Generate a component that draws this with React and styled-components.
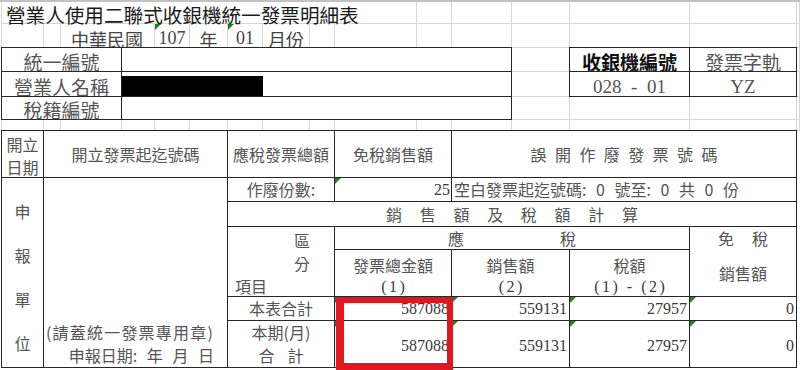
import React from "react";
import styled, { createGlobalStyle, css } from "styled-components";

const GlobalStyle = createGlobalStyle`
  *, *::before, *::after { box-sizing: border-box; }
  html, body { margin: 0; padding: 0; background: #fff; }
  body {
    width: 800px;
    height: 370px;
    overflow: hidden;
    font-family: "Noto Sans CJK TC", "Noto Sans CJK SC", sans-serif;
    color: #555;
  }
`;

const COL_EDGES = [0, 2, 44, 61, 122, 155, 190, 228, 263, 310, 335, 417, 452, 512, 570, 690, 797, 800];
const ROW_EDGES = [0, 2, 24, 48, 72, 97, 120, 131, 178, 202, 227, 250, 297, 321, 368, 370];
const TOP_X = [2, 44, 61, 122, 155, 190, 228, 263, 310, 335, 417, 452, 512, 570, 690, 797, 800];
const TOP_Y = [2, 24, 48, 72, 97, 120, 131];

const track = (edges) => edges.slice(1).map((e, i) => `${e - edges[i]}px`).join(" ");
const lineOf = (edges, v) => edges.indexOf(v) + 1;
const area = (x1, x2, y1, y2) => ({
  $col: `${lineOf(COL_EDGES, x1)} / ${lineOf(COL_EDGES, x2)}`,
  $row: `${lineOf(ROW_EDGES, y1)} / ${lineOf(ROW_EDGES, y2)}`,
});

const placed = css`
  grid-column: ${(p) => p.$col};
  grid-row: ${(p) => p.$row};
`;

const greenMark = css`
  &::before {
    content: "";
    position: absolute;
    top: 0;
    left: 0;
    border-top: 6px solid #2a7a36;
    border-right: 6px solid transparent;
  }
`;

const Sheet = styled.div`
  display: grid;
  grid-template-columns: ${track(COL_EDGES)};
  grid-template-rows: ${track(ROW_EDGES)};
  width: 800px;
  height: 370px;
  overflow: hidden;
  background: #fff;
`;

const FrameRule = styled.div`
  ${placed};
  position: relative;
  z-index: 3;
  background: #c2c2c2;
`;

const GridCell = styled.div`
  ${placed};
  margin: -1px 0 0 -1px;
  border: 1px solid #d6d6d6;
  background: #fff;
`;

const SheetText = styled(GridCell)`
  position: relative;
  display: flex;
  align-items: ${(p) => p.$align || "flex-end"};
  justify-content: ${(p) => p.$justify || "center"};
  padding: ${(p) => p.$pad || "0"};
  white-space: nowrap;
  ${(p) => p.$mark && greenMark};
`;

const Box = styled.div`
  ${placed};
  position: relative;
  margin: -1px 0 0 -1px;
  border: 1px solid #262626;
  background: #fff;
  display: flex;
  flex-direction: ${(p) => p.$dir || "row"};
  align-items: ${(p) => p.$align || "center"};
  justify-content: ${(p) => p.$justify || "center"};
  padding: ${(p) => p.$pad || "0"};
  white-space: nowrap;
  ${(p) => p.$mark && greenMark};
`;

const Highlight = styled.div`
  ${placed};
  position: relative;
  z-index: 2;
  margin: 0 -1px 0 1px;
  border-style: solid;
  border-color: #e1161f;
  border-width: 6px 6px 7px 8px;
`;

const Title = styled.span`
  font-size: 19.6px;
  line-height: 20px;
  color: #1a1a1a;
`;

const Period = styled.span`
  font-size: 18px;
  line-height: 16px;
  color: #444;
`;

const PeriodNum = styled.span`
  font-family: "Liberation Serif", "Times New Roman", serif;
  font-size: 18px;
  line-height: 18px;
  color: #444;
`;

const Label = styled.span`
  font-size: 19px;
  line-height: 19px;
  color: #555;
`;

const KeyLabel = styled(Label)`
  font-weight: 700;
  color: #111;
`;

const Code = styled.span`
  font-family: "Liberation Serif", "Times New Roman", serif;
  font-size: 19px;
  line-height: 19px;
  color: #555;
  white-space: pre;
`;

const Redacted = styled.div`
  width: 141px;
  height: 20px;
  background: #000;
`;

const Head = styled.span`
  display: block;
  font-size: 16px;
  line-height: ${(p) => p.$lh || "23px"};
  color: #555;
  letter-spacing: ${(p) => p.$ls || "0px"};
  padding-left: ${(p) => p.$ls || "0px"};
  word-spacing: ${(p) => p.$ws || "normal"};
  white-space: pre;
`;

const Num = styled.span`
  display: block;
  font-family: "Liberation Serif", "Times New Roman", serif;
  font-size: 16px;
  line-height: ${(p) => p.$lh || "20px"};
  color: #3a3a3a;
  letter-spacing: ${(p) => p.$ls || "0px"};
  padding-left: ${(p) => p.$ls || "0px"};
  white-space: pre;
`;

const UnitLetters = styled.div`
  display: flex;
  flex-direction: column;
  align-items: center;
  gap: 24px;
  padding-top: 23px;
`;

const UnitLetter = styled.span`
  font-size: 16px;
  line-height: 20px;
  color: #555;
`;

const DiagLine = styled.span`
  display: block;
  font-size: 16px;
  line-height: 23px;
  color: #555;
  text-align: ${(p) => p.$side};
  padding: ${(p) => (p.$side === "right" ? "0 24px 0 0" : "0 0 0 7px")};
`;

const TaxFreeHead = styled.div`
  height: 23px;
  display: flex;
  align-items: center;
  justify-content: center;
`;

const TaxFreeBody = styled.div`
  flex: 1;
  display: flex;
  align-items: center;
  justify-content: center;
`;

const gridFill = [];
for (let r = 0; r < TOP_Y.length - 1; r++) {
  for (let c = 0; c < TOP_X.length - 1; c++) {
    gridFill.push([TOP_X[c], TOP_X[c + 1], TOP_Y[r], TOP_Y[r + 1]]);
  }
}

const totals = [
  { label: ["本表合計"], y1: 297, y2: 321, pad: "0 2px 0 0", values: ["587088", "559131", "27957", "0"] },
  { label: ["本期(月)", "合計"], y1: 321, y2: 368, pad: "4px 2px 0 0", values: ["587088", "559131", "27957", "0"] },
];
const valueCols = [[335, 452], [452, 570], [570, 690], [690, 797]];

export default function App() {
  return (
    <>
      <GlobalStyle />
      <Sheet>
        {gridFill.map(([x1, x2, y1, y2]) => (
          <GridCell key={`g-${x1}-${y1}`} {...area(x1, x2, y1, y2)} />
        ))}

        <SheetText {...area(61, 155, 24, 48)} $justify="flex-end" $pad="0 11px 0 0">
          <Period>中華民國</Period>
        </SheetText>
        <SheetText {...area(155, 190, 24, 48)} $mark>
          <PeriodNum>107</PeriodNum>
        </SheetText>
        <SheetText {...area(190, 228, 24, 48)}>
          <Period>年</Period>
        </SheetText>
        <SheetText {...area(228, 263, 24, 48)} $mark>
          <PeriodNum>01</PeriodNum>
        </SheetText>
        <SheetText {...area(263, 310, 24, 48)}>
          <Period>月份</Period>
        </SheetText>

        <SheetText {...area(2, 417, 2, 24)} $align="flex-start" $justify="flex-start" $pad="3px 0 0 4px">
          <Title>營業人使用二聯式收銀機統一發票明細表</Title>
        </SheetText>

        {/* taxpayer info box */}
        <Box {...area(2, 122, 48, 72)} $align="flex-end">
          <Label>統一編號</Label>
        </Box>
        <Box {...area(122, 512, 48, 72)} />
        <Box {...area(2, 122, 72, 97)} $align="flex-end">
          <Label>營業人名稱</Label>
        </Box>
        <Box {...area(122, 512, 72, 97)} $align="flex-end" $justify="flex-start">
          <Redacted />
        </Box>
        <Box {...area(2, 122, 97, 120)} $align="flex-end">
          <Label>稅籍編號</Label>
        </Box>
        <Box {...area(122, 512, 97, 120)} />

        {/* register box */}
        <Box {...area(570, 690, 48, 72)} $align="flex-end">
          <KeyLabel>收銀機編號</KeyLabel>
        </Box>
        <Box {...area(690, 797, 48, 72)} $align="flex-end">
          <Label>發票字軌</Label>
        </Box>
        <Box {...area(570, 690, 72, 97)} $align="flex-end">
          <Code>{"028  -  01"}</Code>
        </Box>
        <Box {...area(690, 797, 72, 97)} $align="flex-end">
          <Code>YZ</Code>
        </Box>

        {/* main table header */}
        <Box {...area(2, 44, 131, 178)} $dir="column" $pad="4px 0 0 0">
          <Head>開立</Head>
          <Head>日期</Head>
        </Box>
        <Box {...area(44, 228, 131, 178)}>
          <Head>開立發票起迄號碼</Head>
        </Box>
        <Box {...area(228, 335, 131, 178)}>
          <Head>應稅發票總額</Head>
        </Box>
        <Box {...area(335, 452, 131, 178)}>
          <Head>免稅銷售額</Head>
        </Box>
        <Box {...area(452, 797, 131, 178)}>
          <Head $ls="8.4px">誤開作廢發票號碼</Head>
        </Box>

        {/* side columns */}
        <Box {...area(2, 44, 178, 368)} $dir="column" $justify="flex-start">
          <UnitLetters>
            {["申", "報", "單", "位"].map((ch) => (
              <UnitLetter key={ch}>{ch}</UnitLetter>
            ))}
          </UnitLetters>
        </Box>
        <Box {...area(44, 228, 178, 368)} $dir="column" $align="flex-end" $justify="flex-end" $pad="0 13px 0 0">
          <Head $ls="1.2px">(請蓋統一發票專用章)</Head>
          <Head $ws="6px">申報日期: 年 月 日</Head>
        </Box>

        {/* void count row */}
        <Box {...area(228, 335, 178, 202)}>
          <Head>作廢份數:</Head>
        </Box>
        <Box {...area(335, 452, 178, 202)} $justify="flex-end" $pad="0 1px 0 0" $mark>
          <Num>25</Num>
        </Box>
        <Box {...area(452, 797, 178, 202)} $justify="flex-start" $pad="0 0 0 2px">
          <Head $ws="6px">空白發票起迄號碼: 0 號至: 0 共 0 份</Head>
        </Box>

        <Box {...area(228, 797, 202, 227)}>
          <Head $ls="17.7px">銷售額及稅額計算</Head>
        </Box>

        {/* sub header */}
        <Box {...area(228, 335, 227, 297)} $dir="column" $align="stretch" $justify="flex-start" $pad="2px 0 0 0">
          <DiagLine $side="right">區</DiagLine>
          <DiagLine $side="right">分</DiagLine>
          <DiagLine $side="left">項目</DiagLine>
        </Box>
        <Box {...area(335, 690, 227, 250)}>
          <Head $ls="96px">應稅</Head>
        </Box>
        <Box {...area(690, 797, 227, 297)} $dir="column" $align="stretch" $justify="flex-start">
          <TaxFreeHead>
            <Head $ls="18px">免稅</Head>
          </TaxFreeHead>
          <TaxFreeBody>
            <Head>銷售額</Head>
          </TaxFreeBody>
        </Box>
        <Box {...area(335, 452, 250, 297)} $dir="column" $justify="flex-start" $pad="4px 0 0 0">
          <Head $lh="22px">發票總金額</Head>
          <Num $lh="22px" $ls="2.5px">(1)</Num>
        </Box>
        <Box {...area(452, 570, 250, 297)} $dir="column" $justify="flex-start" $pad="4px 0 0 0">
          <Head $lh="22px">銷售額</Head>
          <Num $lh="22px" $ls="2.5px">(2)</Num>
        </Box>
        <Box {...area(570, 690, 250, 297)} $dir="column" $justify="flex-start" $pad="4px 0 0 0">
          <Head $lh="22px">稅額</Head>
          <Num $lh="22px" $ls="2.5px">(1) - (2)</Num>
        </Box>

        {/* totals */}
        {totals.map((row) => (
          <React.Fragment key={row.y1}>
            <Box {...area(228, 335, row.y1, row.y2)} $dir="column">
              {row.label.map((t, i) =>
                t === "合計" ? (
                  <Head key={i} $ls="13px">{t}</Head>
                ) : (
                  <Head key={i}>{t}</Head>
                )
              )}
            </Box>
            {valueCols.map(([x1, x2], i) => (
              <Box
                key={x1}
                {...area(x1, x2, row.y1, row.y2)}
                $justify="flex-end"
                $pad={row.pad}
                $mark
              >
                <Num>{row.values[i]}</Num>
              </Box>
            ))}
          </React.Fragment>
        ))}

        <Highlight {...area(335, 452, 297, 370)} />
        <FrameRule {...area(0, 800, 0, 2)} />
      </Sheet>
    </>
  );
}
